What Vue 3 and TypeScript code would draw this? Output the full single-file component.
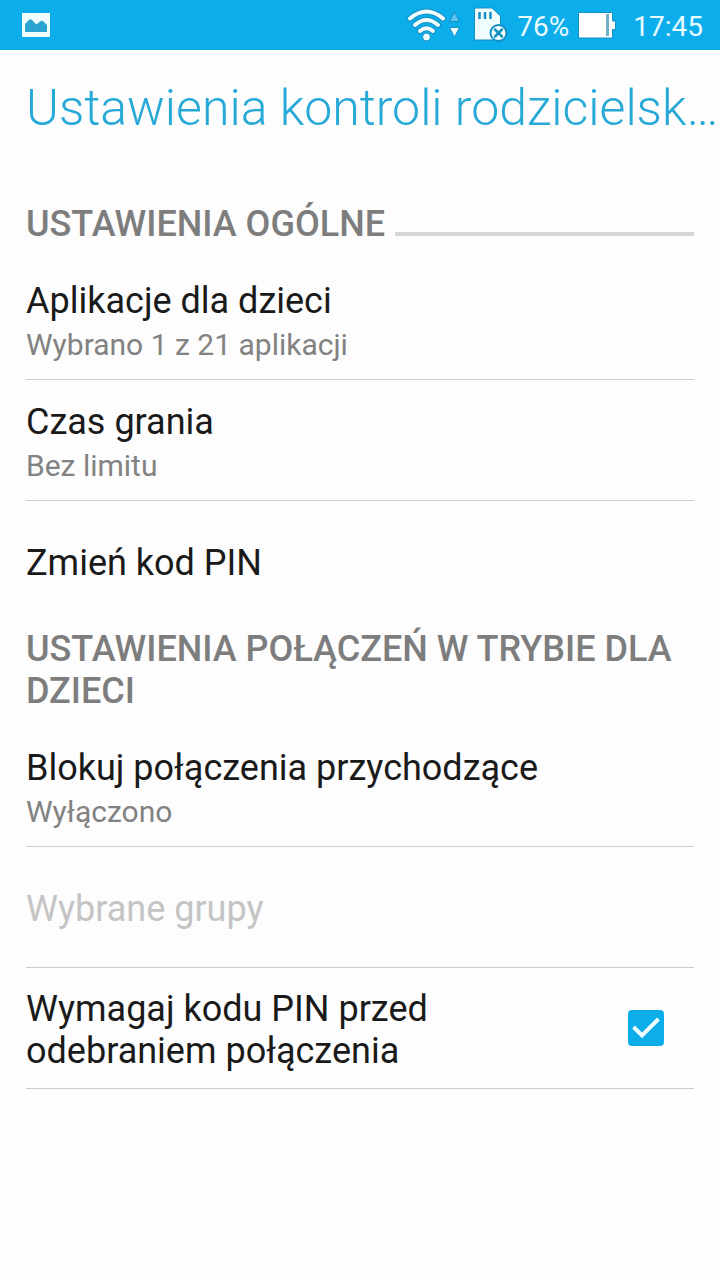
<script setup lang="ts">
import { ref } from 'vue'

interface Preference {
  id: string
  title: string
  summary?: string
  disabled?: boolean
  divider: boolean
}

const general: Preference[] = [
  { id: 'apps', title: 'Aplikacje dla dzieci', summary: 'Wybrano 1 z 21 aplikacji', divider: true },
  { id: 'time', title: 'Czas grania', summary: 'Bez limitu', divider: true },
  { id: 'pin', title: 'Zmień kod PIN', divider: false },
]

const calls: Preference[] = [
  { id: 'block', title: 'Blokuj połączenia przychodzące', summary: 'Wyłączono', divider: true },
  { id: 'groups', title: 'Wybrane grupy', disabled: true, divider: true },
]

const requirePin = ref(true)
</script>

<template>
  <div class="screen">
    <div class="status">
      <svg class="picture" width="30" height="26" viewBox="0 0 30 26" aria-hidden="true">
        <rect x="1" y="1" width="28" height="24" fill="#f2fdff" />
        <path d="M4 20V12L8 8Q9.500 6.500 11 8L15.500 12.500L19 9.500Q21 8 22.500 9.500L26 13V20Z" fill="#2aa5d2" />
      </svg>
      <div class="indicators">
        <svg class="wifi" width="56" height="40" viewBox="0 0 56 40" aria-hidden="true">
          <g fill="none" stroke-linecap="round">
            <g stroke="#168fc1" stroke-width="6">
              <path d="M4 13.500Q20.500 -0.500 37 13.500" />
              <path d="M9 20Q20.500 10 32 20" />
              <path d="M14 26Q20.500 20.500 27 26" />
            </g>
            <g stroke="#f0fdff" stroke-width="4">
              <path d="M4 13.500Q20.500 -0.500 37 13.500" />
              <path d="M9 20Q20.500 10 32 20" />
              <path d="M14 26Q20.500 20.500 27 26" />
            </g>
          </g>
          <circle cx="20.500" cy="32" r="4" fill="#f0fdff" stroke="#168fc1" />
          <path d="M43.500 16.500L48.500 7L53.500 16.500Z" fill="#5cc4f2" stroke="#168fc1" />
          <path d="M43.500 22.500L48.500 32L53.500 22.500Z" fill="#f0fdff" stroke="#168fc1" />
        </svg>
        <svg class="card" width="36" height="36" viewBox="0 0 36 36" aria-hidden="true">
          <path d="M2.500 2.500Q2.500 1 4 1H20L28.500 9V33H2.500Z" fill="#f0fdff" stroke="#168fc1" />
          <path d="M7.500 5V12M13 5V12M18.500 5V12" stroke="#168fc1" stroke-width="2.500" />
          <circle cx="26.500" cy="26" r="8" fill="#f0fdff" stroke="#168fc1" stroke-width="2" />
          <path d="M23 22.500L30 29.500M30 22.500L23 29.500" stroke="#168fc1" stroke-width="2.500" stroke-linecap="round" />
        </svg>
        <span class="percent">76%</span>
        <svg class="battery" width="40" height="28" viewBox="0 0 40 28" aria-hidden="true">
          <path d="M1.500 1.500H35.500V10H38.500V18.500H35.500V27H1.500Z" fill="#fff" stroke="#168fc1" />
          <rect x="29" y="3" width="3" height="22" fill="#6fb0c9" />
        </svg>
        <time class="clock">17:45</time>
      </div>
    </div>

    <header class="bar">
      <h1>Ustawienia kontroli rodzicielsk…</h1>
    </header>

    <main>
      <section>
        <h2 class="ruled">USTAWIENIA OGÓLNE</h2>
        <button
          v-for="item in general"
          :key="item.id"
          type="button"
          class="row"
          :class="{ divided: item.divider }"
        >
          <span class="text">
            <span class="title">{{ item.title }}</span>
            <span v-if="item.summary" class="summary">{{ item.summary }}</span>
          </span>
        </button>
      </section>

      <section class="second">
        <h2>USTAWIENIA POŁĄCZEŃ W TRYBIE DLA DZIECI</h2>
        <button
          v-for="item in calls"
          :key="item.id"
          type="button"
          class="row"
          :class="{ divided: item.divider }"
          :disabled="item.disabled"
        >
          <span class="text">
            <span class="title">{{ item.title }}</span>
            <span v-if="item.summary" class="summary">{{ item.summary }}</span>
          </span>
        </button>
        <label class="row divided" for="require-pin">
          <span class="text">
            <span class="title">Wymagaj kodu PIN przed odebraniem połączenia</span>
          </span>
          <span class="check">
            <input id="require-pin" v-model="requirePin" type="checkbox" />
            <svg v-if="requirePin" width="36" height="36" viewBox="0 0 36 36" aria-hidden="true">
              <path d="M5.500 17L14 25.500L30.500 9" fill="none" stroke="#eefcff" stroke-width="4" />
            </svg>
          </span>
        </label>
      </section>
    </main>
  </div>
</template>

<style>
body {
  margin: 0;
  background: #fdfdfd;
}
</style>

<style scoped>
.screen {
  min-height: 100vh;
  background: #fdfdfd;
  font-family: Roboto, "Noto Sans", sans-serif;
  color: #1a1a1a;
}

.status {
  display: flex;
  align-items: center;
  justify-content: space-between;
  box-sizing: border-box;
  height: 50px;
  padding: 0 17px 0 21px;
  background: #0cadeb;
  color: #e6faff;
  font-size: 28px;
  line-height: 32px;
}

.status svg {
  display: block;
}

.indicators {
  display: flex;
  align-items: center;
}

.card {
  margin-left: 10px;
}

.percent {
  margin: 3px 8px 0 10px;
}

.card + .percent {
  margin-left: 9px;
}

.clock {
  margin: 3px 0 0 16px;
}

.bar {
  padding: 28px 0 0 26px;
}

h1 {
  margin: 0;
  color: #27a9d8;
  font-size: 50px;
  font-weight: 300;
  line-height: 60px;
  white-space: nowrap;
}

main {
  padding: 65px 26px 0;
}

h2 {
  margin: 0 0 14px;
  color: #7d7d7d;
  font-size: 36px;
  font-weight: 500;
  line-height: 42px;
}

.ruled {
  display: flex;
  align-items: flex-end;
  gap: 10px;
}

.ruled::after {
  flex: 1;
  height: 4px;
  margin-bottom: 9px;
  background: #d5d5d5;
  content: "";
}

.second {
  margin-top: 6px;
}

.row {
  display: flex;
  align-items: center;
  justify-content: space-between;
  box-sizing: border-box;
  width: 100%;
  min-height: 121px;
  padding: 0;
  border: 0;
  border-bottom: 1px solid transparent;
  background: none;
  color: inherit;
  font: inherit;
  text-align: left;
}

.divided {
  border-bottom-color: #cdcdcd;
}

.text {
  display: flex;
  flex: 1;
  flex-direction: column;
  gap: 5px;
  padding: 20px 0 16px;
}

.title {
  font-size: 36px;
  line-height: 42px;
}

.summary {
  color: #828282;
  font-size: 30px;
  line-height: 36px;
}

.row:disabled .title {
  color: #c4c4c4;
}

.check {
  position: relative;
  width: 36px;
  height: 36px;
  margin: 0 30px 0 120px;
}

.check input {
  display: block;
  width: 36px;
  height: 36px;
  margin: 0;
  border: 2px solid #0cadeb;
  border-radius: 4px;
  appearance: none;
}

.check input:checked {
  background: #0cadeb;
}

.check svg {
  position: absolute;
  inset: 0;
  pointer-events: none;
}
</style>
